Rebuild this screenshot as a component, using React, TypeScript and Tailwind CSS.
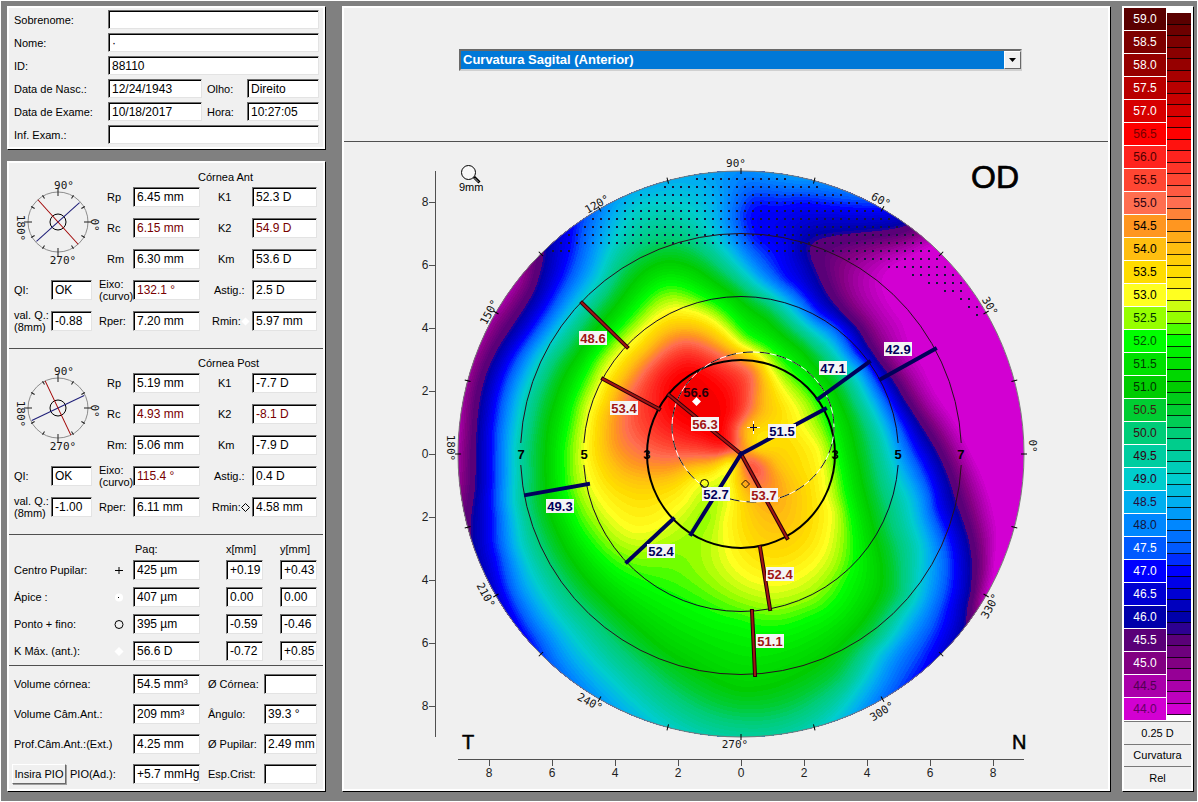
import React from 'react';
import clsx from 'clsx';

const FONT = '"Liberation Sans", Arial, sans-serif';
const MONO = '"DejaVu Sans Mono", monospace';

// Dioptre scale, 59.0 down to 44.0 in steps of 0.5
const SCALE: { color: string; text: string }[] = [
  { color: '#5a0000', text: 'text-white' },
  { color: '#7d0000', text: 'text-white' },
  { color: '#960000', text: 'text-white' },
  { color: '#b90000', text: 'text-white' },
  { color: '#d70000', text: 'text-white' },
  { color: '#ff0000', text: 'text-[#780000]' },
  { color: '#ff231e', text: 'text-[#500000]' },
  { color: '#ff4632', text: 'text-[#3c0000]' },
  { color: '#ff6e50', text: 'text-[#280010]' },
  { color: '#ff9620', text: 'text-black' },
  { color: '#ffbe10', text: 'text-black' },
  { color: '#ffdc00', text: 'text-black' },
  { color: '#ffff20', text: 'text-black' },
  { color: '#96ff00', text: 'text-[#003200]' },
  { color: '#00ff00', text: 'text-[#005000]' },
  { color: '#00e100', text: 'text-[#003c00]' },
  { color: '#00cc00', text: 'text-[#003200]' },
  { color: '#00cd32', text: 'text-[#3c1e14]' },
  { color: '#00cd78', text: 'text-[#3c0a14]' },
  { color: '#00cda0', text: 'text-[#320014]' },
  { color: '#00cdcd', text: 'text-[#28001e]' },
  { color: '#00aff0', text: 'text-[#280a3c]' },
  { color: '#0087ff', text: 'text-[#14143c]' },
  { color: '#005aff', text: 'text-white' },
  { color: '#0000ff', text: 'text-white' },
  { color: '#0000d2', text: 'text-white' },
  { color: '#0000aa', text: 'text-white' },
  { color: '#5a0078', text: 'text-white' },
  { color: '#820082', text: 'text-white' },
  { color: '#aa00aa', text: 'text-[#500050]' },
  { color: '#d200d2', text: 'text-[#640064]' },
];

function mix(a: string, b: string) {
  const ch = (s: string, i: number) => parseInt(s.slice(i, i + 2), 16);
  const hex = [1, 3, 5].map((i) => Math.round((ch(a, i) + ch(b, i)) / 2).toString(16).padStart(2, '0'));
  return `#${hex.join('')}`;
}

const subdivide = (colors: string[]) =>
  colors.flatMap((c, i) => (i < colors.length - 1 ? [c, mix(c, colors[i + 1])] : [c]));

// Quarter dioptre steps for the bar, eighths for the map
const FINE = subdivide(SCALE.map((s) => s.color));
const FINEST = subdivide(FINE);

const CX = 741;
const CY = 454;
const R = 283;

// Measured power (D) at points on the cornea, x/y pairs
const SAMPLES: [number, number[]][] = [
  [43, [960, 330, 1000, 450, 940, 290]],
  [43.5, [1010, 520]],
  [44.1, [925, 247, 892, 263, 882, 293, 902, 323, 922, 367, 948, 413, 968, 450, 992, 517, 993, 560, 985, 600]],
  [44.9, [860, 255, 845, 275, 872, 325, 900, 370, 925, 410, 953, 453, 977, 517, 985, 563, 525, 278, 495, 323, 465, 433]],
  [45.8, [543, 260, 538, 276, 527, 303, 510, 330, 497, 350, 485, 377, 478, 410, 475, 450, 475, 490, 470, 520]],
  [45.8, [905, 227, 868, 232, 828, 238, 808, 245, 810, 260, 822, 283, 845, 317, 878, 363, 902, 397, 922, 427, 938, 454, 962, 517, 972, 563, 972, 593, 966, 625]],
  [46.5, [556, 250, 530, 318, 485, 430, 483, 500, 484, 555, 882, 218, 810, 221, 802, 267, 860, 350, 895, 397, 928, 454, 950, 517, 962, 563, 957, 620]],
  [47.1, [575, 225, 572, 250, 563, 277, 547, 307, 527, 337, 510, 363, 500, 390, 495, 417, 493, 450, 493, 483, 494, 517, 498, 557, 508, 597, 520, 623, 532, 642]],
  [47.1, [755, 202, 802, 200, 835, 205, 882, 208, 747, 217, 755, 240, 785, 280, 818, 313, 848, 337, 872, 370, 888, 397, 905, 427, 917, 454, 935, 507, 952, 550, 953, 577, 945, 610, 922, 667]],
  [46.9, [770, 218, 785, 245]],
  [48, [587, 260, 570, 293, 543, 333, 520, 370, 507, 410, 503, 450, 502, 500, 507, 550, 518, 590, 537, 623, 560, 660]],
  [48, [741, 173, 768, 180, 800, 184, 728, 215, 737, 240, 762, 273, 795, 300, 832, 330, 862, 367, 882, 403, 898, 440, 925, 500, 935, 540, 938, 577, 925, 617, 902, 650, 885, 683]],
  [47.7, [742, 193, 840, 193]],
  [48.5, [697, 183, 650, 188, 717, 203]],
  [49, [610, 250, 600, 277, 570, 317, 540, 357, 523, 397, 514, 450, 513, 500, 520, 543, 537, 583, 563, 623, 590, 657, 617, 685, 640, 205, 705, 225]],
  [49, [735, 262, 755, 283, 785, 305, 818, 336, 845, 365, 868, 402, 885, 438, 908, 500, 920, 543, 918, 577, 905, 613, 878, 650, 855, 690]],
  [50, [650, 243, 617, 273, 590, 313, 557, 357, 537, 400, 528, 450, 528, 493, 538, 537, 560, 580, 597, 623, 643, 670, 697, 710, 741, 722]],
  [50, [700, 250, 735, 280, 768, 303, 802, 335, 832, 367, 855, 403, 870, 438, 882, 490, 892, 527, 902, 567, 902, 597, 875, 640, 845, 680, 800, 712]],
  [51, [663, 262, 633, 283, 610, 313, 577, 357, 555, 403, 547, 450, 547, 483, 560, 537, 587, 580, 617, 610, 660, 647, 697, 670, 740, 690]],
  [51, [700, 271, 735, 295, 768, 320, 802, 350, 832, 385, 848, 420, 855, 450, 862, 483, 872, 523, 882, 570, 878, 597, 852, 633, 812, 667, 768, 687]],
  [52, [663, 285, 637, 307, 617, 330, 590, 363, 570, 410, 562, 450, 563, 483, 580, 530, 613, 567, 657, 590, 697, 608, 740, 622]],
  [52, [700, 295, 745, 332, 785, 360, 815, 397, 830, 430, 837, 450, 842, 470, 850, 510, 855, 550, 845, 583, 808, 618, 775, 628]],
  [52.5, [670, 297, 643, 317, 617, 343, 593, 380, 580, 417, 575, 450, 577, 483, 597, 523, 630, 553, 667, 547, 708, 518, 700, 570, 740, 600]],
  [52.5, [755, 347, 785, 377, 808, 403, 822, 433, 830, 467, 837, 500, 842, 537, 835, 570, 812, 597, 775, 608]],
  [53, [677, 308, 637, 335, 610, 365, 590, 407, 585, 450, 590, 480, 610, 513, 635, 531, 660, 525, 685, 502, 712, 480, 730, 463]],
  [53, [740, 346, 768, 370, 792, 403, 802, 427, 818, 450, 825, 470, 832, 510, 825, 547, 802, 573, 768, 583, 735, 565, 725, 520, 730, 490]],
  [53.5, [683, 321, 643, 345, 620, 371, 605, 403, 597, 433, 603, 470, 627, 492, 663, 490, 697, 472, 780, 412, 785, 440, 800, 470, 808, 510, 790, 550, 750, 540]],
  [54.4, [683, 333, 643, 361, 623, 390, 613, 417, 613, 443, 627, 463, 670, 469, 705, 462, 758, 400, 758, 370, 738, 356]],
  [55, [683, 342, 650, 365, 630, 393, 626, 420, 638, 446, 690, 456, 720, 455, 750, 373, 751, 405, 737, 447]],
  [56, [687, 358, 660, 375, 655, 403, 668, 430, 705, 443, 728, 446, 735, 415, 731, 381]],
  [56.6, [696, 400, 697, 378, 677, 408, 715, 408, 715, 430]],
  [55.3, [749, 463, 755, 472]],
  [54.7, [768, 473, 765, 487]],
  [54.3, [743, 430]],
  [54, [752, 500, 778, 467, 789, 490, 782, 518, 748, 440, 762, 415]],
  [53.4, [734, 480, 757, 446, 768, 440]],
];

const STEP = 4;
const COLS = Math.ceil((2 * R) / STEP) + 2;
const SMOOTH = 0.005;

const kernel = (dx: number, dy: number) => {
  const d = dx * dx + dy * dy;
  return d === 0 ? 0 : d * Math.log(d);
};

// Thin plate spline through the samples, evaluated on a square grid
function buildGrid() {
  const pts: [number, number, number][] = [];
  SAMPLES.forEach(([v, xy]) => {
    for (let i = 0; i < xy.length; i += 2) pts.push([(xy[i] - CX) / R, (xy[i + 1] - CY) / R, v]);
  });
  const n = pts.length;
  const size = n + 3;
  const m = Array.from({ length: size }, () => new Float64Array(size + 1));
  for (let i = 0; i < n; i++) {
    for (let j = 0; j < n; j++) m[i][j] = kernel(pts[i][0] - pts[j][0], pts[i][1] - pts[j][1]);
    // the centre keeps its sharp bow tie, the periphery is smoothed
    const dist = Math.hypot(pts[i][0], pts[i][1]);
    m[i][i] = dist < 0.3 ? SMOOTH / 5 : SMOOTH;
    [1, pts[i][0], pts[i][1]].forEach((p, k) => {
      m[i][n + k] = p;
      m[n + k][i] = p;
    });
    m[i][size] = pts[i][2];
  }
  for (let c = 0; c < size; c++) {
    let p = c;
    for (let r = c + 1; r < size; r++) if (Math.abs(m[r][c]) > Math.abs(m[p][c])) p = r;
    [m[c], m[p]] = [m[p], m[c]];
    for (let r = c + 1; r < size; r++) {
      const f = m[r][c] / m[c][c];
      if (f) for (let k = c; k <= size; k++) m[r][k] -= f * m[c][k];
    }
  }
  const w = new Float64Array(size);
  for (let r = size - 1; r >= 0; r--) {
    let s = m[r][size];
    for (let k = r + 1; k < size; k++) s -= m[r][k] * w[k];
    w[r] = s / m[r][r];
  }
  const grid: number[][] = [];
  for (let j = 0; j < COLS; j++) {
    grid.push([]);
    for (let i = 0; i < COLS; i++) {
      const x = (i * STEP - R) / R;
      const y = (j * STEP - R) / R;
      let v = w[n] + w[n + 1] * x + w[n + 2] * y;
      for (let k = 0; k < n; k++) v += w[k] * kernel(x - pts[k][0], y - pts[k][1]);
      grid[j].push(v);
    }
  }
  return grid;
}

// Path of everything at or above the level
function bandPath(grid: number[][], level: number) {
  const x0 = CX - R;
  const y0 = CY - R;
  let d = '';
  for (let j = 0; j < COLS - 1; j++) {
    let run = -1;
    for (let i = 0; i < COLS; i++) {
      const corners =
        i < COLS - 1
          ? [
              [i, j, grid[j][i]],
              [i + 1, j, grid[j][i + 1]],
              [i + 1, j + 1, grid[j + 1][i + 1]],
              [i, j + 1, grid[j + 1][i]],
            ]
          : [];
      const above = corners.filter((c) => c[2] >= level).length;
      if (above === 4) {
        if (run < 0) run = i;
        continue;
      }
      if (run >= 0) {
        d += `M${x0 + run * STEP} ${y0 + j * STEP}h${(i - run) * STEP}v${STEP}h${(run - i) * STEP}z`;
        run = -1;
      }
      if (above > 0) {
        const poly: string[] = [];
        corners.forEach((a, k) => {
          const b = corners[(k + 1) % 4];
          if (a[2] >= level) poly.push(`${x0 + a[0] * STEP} ${y0 + a[1] * STEP}`);
          if (a[2] >= level !== b[2] >= level) {
            const t = (level - a[2]) / (b[2] - a[2]);
            const px = x0 + (a[0] + t * (b[0] - a[0])) * STEP;
            const py = y0 + (a[1] + t * (b[1] - a[1])) * STEP;
            poly.push(`${px.toFixed(1)} ${py.toFixed(1)}`);
          }
        });
        d += `M${poly.join('L')}z`;
      }
    }
  }
  return d;
}

const GRID = buildGrid();
const BANDS = FINEST.map((color, i) => ({ color, level: 59 - i * 0.125 }))
  // blue meets purple on a hard edge
  .filter((b) => b.level > 44 && b.level <= 57 && !(b.level > 45.5 && b.level < 45.8))
  .reverse()
  .map((b) => ({ level: b.level, color: b.color, d: bandPath(GRID, b.level - 0.063) }));

// Extrapolated area is marked with dots
const DOT_ROWS: [number, number][] = [
  [251, 765], [259, 845], [267, 888], [275, 913], [283, 928], [291, 945], [299, 961], [307, 968], [315, 977],
];

function dotsPath() {
  let d = '';
  const put = (x: number, y: number) => {
    if (Math.hypot(x - CX, y - CY) < R - 4) d += `M${x - 1} ${y - 1}h2v2h-2z`;
  };
  for (let x = 457; x < 1024; x += 8) {
    for (let y = 179; y < 250; y += 8) put(x, y);
    DOT_ROWS.forEach(([y, from]) => x >= from && put(x, y));
    if (x < 572) put(x, 251);
  }
  return d;
}

const RED = '#a01414';
const NAVY = '#00005a';

const MERIDIANS: [number, number, number, number, string][] = [
  [582, 303, 627, 347, RED],
  [603, 379, 659, 409, RED],
  [669, 395, 741, 454, RED],
  [741, 454, 787, 538, RED],
  [760, 547, 770, 609, RED],
  [752, 611, 755, 675, RED],
  [741, 454, 825, 409, NAVY],
  [818, 399, 869, 362, NAVY],
  [881, 379, 935, 349, NAVY],
  [741, 454, 691, 534, NAVY],
  [673, 519, 627, 562, NAVY],
  [588, 484, 526, 495, NAVY],
];

const TAGS: [string, number, number, string][] = [
  ['48.6', 593, 338, RED],
  ['53.4', 624, 408, RED],
  ['56.3', 705, 424, RED],
  ['53.7', 764, 495, RED],
  ['52.4', 780, 574, RED],
  ['51.1', 770, 641, RED],
  ['51.5', 782, 431, NAVY],
  ['47.1', 833, 368, NAVY],
  ['42.9', 898, 349, NAVY],
  ['52.7', 716, 494, NAVY],
  ['52.4', 661, 551, NAVY],
  ['49.3', 560, 506, NAVY],
];

const DEGREES: [string, number, number, number][] = [
  ['90°', 736, 163, 0],
  ['60°', 881, 200, 28],
  ['30°', 990, 306, 60],
  ['0°', 1033, 446, 90],
  ['330°', 990, 606, -62],
  ['300°', 882, 711, -32],
  ['270°', 735, 744, 0],
  ['240°', 590, 702, 28],
  ['210°', 486, 595, 62],
  ['180°', 451, 448, 90],
  ['150°', 489, 312, -62],
  ['120°', 597, 204, -30],
];

function ring(r: number) {
  const g = 11;
  const dx = Math.sqrt(r * r - g * g);
  return (
    `M${CX - dx} ${CY - g}A${r} ${r} 0 0 1 ${CX + dx} ${CY - g}` +
    `M${CX - dx} ${CY + g}A${r} ${r} 0 0 0 ${CX + dx} ${CY + g}`
  );
}

function CurvatureMap() {
  const axis = [-8, -6, -4, -2, 0, 2, 4, 6, 8];
  return (
    <svg viewBox="344 142 764 646" className="block w-full" role="img" aria-label="Curvatura Sagital">
      <defs>
        <clipPath id="cornea">
          <circle cx={CX} cy={CY} r={R} />
        </clipPath>
      </defs>
      <g clipPath="url(#cornea)">
        <circle cx={CX} cy={CY} r={R} fill="#d200d2" />
        {BANDS.map((b) => (
          <path key={b.level} d={b.d} fill={b.color} shapeRendering="crispEdges" />
        ))}
      </g>
      <path d={dotsPath()} fill="#14143c" shapeRendering="crispEdges" />
      <circle cx={CX} cy={CY} r={R} fill="none" stroke="#787878" strokeWidth="1" />

      {/* Axes */}
      <g stroke="#505050" strokeWidth="1" shapeRendering="crispEdges">
        <path d="M435.5 171V737M458 759.5H1024" />
        {axis.map((a) => (
          <path key={a} d={`M429 ${CY + a * 31.5 + 0.5}h6M${CX + a * 31.5 + 0.5} 760v6`} />
        ))}
      </g>
      <g fontFamily={FONT} fontSize="12" fill="#1e1e1e" textAnchor="middle">
        {axis.map((a) => (
          <React.Fragment key={a}>
            <text x="425" y={CY + a * 31.5 + 4}>{Math.abs(a)}</text>
            <text x={CX + a * 31.5} y="777">{Math.abs(a)}</text>
          </React.Fragment>
        ))}
      </g>

      {/* Degree marks */}
      {Array.from({ length: 24 }, (_, i) => (
        <path key={i} d={`M${R - 3} 0h6`} stroke="#000" transform={`translate(${CX} ${CY}) rotate(${i * 15})`} />
      ))}
      <g fontFamily={MONO} fontSize="11" fill="#141414" textAnchor="middle">
        {DEGREES.map(([t, x, y, a]) => (
          <text key={t} y="4" transform={`translate(${x} ${y}) rotate(${a})`}>{t}</text>
        ))}
      </g>

      {/* Zones */}
      <path d={ring(157.5)} fill="none" stroke="#140a28" strokeWidth="1" />
      <path d={ring(220.5)} fill="none" stroke="#28101e" strokeWidth="1" />
      <circle cx={CX} cy={CY} r="94" fill="none" stroke="#000" strokeWidth="2" />
      <ellipse cx="753" cy="427" rx="81" ry="75" fill="none" stroke="#fff" strokeWidth="1" />
      <ellipse cx="753" cy="427" rx="81" ry="75" fill="none" stroke="#141414" strokeWidth="1" strokeDasharray="10 7" />
      <g fontFamily={FONT} fontSize="13" fontWeight="700" textAnchor="middle">
        {[3, 5, 7].map((z) => (
          <React.Fragment key={z}>
            <text x={CX - z * 31.4} y="459">{z}</text>
            <text x={CX + z * 31.4} y="459">{z}</text>
          </React.Fragment>
        ))}
      </g>

      {MERIDIANS.map(([x1, y1, x2, y2, c], i) => (
        <g key={i} strokeLinecap="square">
          <path d={`M${x1} ${y1}L${x2} ${y2}`} stroke={c === RED ? '#28000a' : c} strokeWidth="4" />
          {c === RED && <path d={`M${x1} ${y1}L${x2} ${y2}`} stroke={c} strokeWidth="2" />}
        </g>
      ))}
      <g fontFamily={FONT} fontSize="13" fontWeight="700" textAnchor="middle">
        {TAGS.map(([t, x, y, c], i) => (
          <g key={i}>
            <rect x={x - 14} y={y - 7} width="28" height="14" fill="#f5f5f5" />
            <text x={x} y={y + 5} fill={c}>{t}</text>
          </g>
        ))}
        <text x="696" y="397" fill="#28000a">56.6</text>
      </g>

      {/* Pupil centre, K max, thinnest point, posterior Rmin */}
      <path d="M747 427.5h13M753.5 421v13" stroke="#fff" />
      <path d="M750 427.5h7M753.5 424v7" stroke="#00003c" />
      <path d="M696.5 397l4.5 4.5-4.5 4.5-4.5-4.5z" fill="#fff" />
      <circle cx="704.5" cy="483.5" r="4" fill="none" stroke="#000" />
      <path d="M745.5 480l4 4-4 4-4-4z" fill="none" stroke="#28140a" />

      {/* Magnifier */}
      <circle cx="468.5" cy="172.5" r="7" fill="#f8f8f8" stroke="#000" />
      <path d="M474 177l5.5 5.5" stroke="#000" strokeWidth="3" />
      <path d="M474.5 178l4 4" stroke="#aaa" strokeWidth="1" />
      <g fontFamily={FONT}>
        <text x="459" y="191" fontSize="11">9mm</text>
        <text x="971" y="188" fontSize="32" stroke="#000" strokeWidth="0.7">OD</text>
        <text x="462" y="749" fontSize="20" stroke="#000" strokeWidth="0.5">T</text>
        <text x="1012" y="749" fontSize="20" stroke="#000" strokeWidth="0.5">N</text>
      </g>
    </svg>
  );
}

function AxisDial({ angle }: { angle: number }) {
  return (
    <svg viewBox="-44 -45 90 90" className="block w-[90px] h-[90px] max-w-none" aria-hidden="true">
      <circle r="30" fill="none" stroke="#8c8c8c" />
      {Array.from({ length: 12 }, (_, i) => (
        <path key={i} d={i % 3 ? 'M27 0h4' : 'M26 0h8'} stroke="#1e1e1e" transform={`rotate(${i * 30})`} />
      ))}
      <circle r="8" fill="none" stroke="#000" />
      <path d="M-29 0H29" stroke="#1e1e78" transform={`rotate(${90 - angle})`} />
      <path d="M-30 0H30" stroke="#a00000" transform={`rotate(${-angle})`} />
      <g fontFamily={MONO} fontSize="11" fill="#141414" textAnchor="middle">
        <text x="6" y="-33">90°</text>
        <text x="5" y="42">270°</text>
        <text transform="translate(-41 6) rotate(90)">180°</text>
        <text transform="translate(33 3) rotate(90)">0°</text>
      </g>
    </svg>
  );
}

function Panel({ className, children }: { className?: string; children: React.ReactNode }) {
  return (
    <div className={clsx('border-2 border-white bg-[#f0f0f0] shadow-[1px_1px_0_#000]', className)}>{children}</div>
  );
}

interface FieldProps {
  id: string;
  value?: string;
  red?: boolean;
  label?: string;
  className?: string;
}

function Field({ id, value = '', red, label, className }: FieldProps) {
  return (
    <input
      id={id}
      aria-label={label}
      defaultValue={value}
      className={clsx(
        'block w-full min-w-0 h-full bg-white border border-t-[#6e6e6e] border-l-[#6e6e6e] border-r-[#e3e3e3] border-b-[#e3e3e3] shadow-[inset_1px_1px_0_#000] pl-[3px] text-xs outline-none',
        red ? 'text-[#780000]' : 'text-black',
        className
      )}
    />
  );
}

function Label({ id, className, children }: { id: string; className?: string; children: React.ReactNode }) {
  return (
    <label htmlFor={id} className={clsx('self-center whitespace-nowrap', className)}>
      {children}
    </label>
  );
}

function PatientPanel() {
  return (
    <Panel className="grid grid-cols-[94px_94px_5px_40px_1fr] auto-rows-[19px] gap-y-1 pt-[2px] pb-[3px] pl-[5px] pr-1">
      <Label id="sobrenome">Sobrenome:</Label>
      <Field id="sobrenome" className="col-span-4" />
      <Label id="nome">Nome:</Label>
      <Field id="nome" value="·" className="col-span-4" />
      <Label id="pid">ID:</Label>
      <Field id="pid" value="88110" className="col-span-4" />
      <Label id="nasc">Data de Nasc.:</Label>
      <Field id="nasc" value="12/24/1943" />
      <Label id="olho" className="col-start-4">Olho:</Label>
      <Field id="olho" value="Direito" />
      <Label id="exame">Data de Exame:</Label>
      <Field id="exame" value="10/18/2017" />
      <Label id="hora" className="col-start-4">Hora:</Label>
      <Field id="hora" value="10:27:05" />
      <Label id="inf">Inf. Exam.:</Label>
      <Field id="inf" className="col-span-4" />
    </Panel>
  );
}

interface Cornea {
  id: string;
  title: string;
  angle: number;
  r: [string, string, string];
  k: [string, string, string];
  rmLabel: string;
  axis: string;
  astig: string;
  q: string;
  rper: string;
  rmin: string;
  mark: React.ReactNode;
}

function CorneaSection({ c }: { c: Cornea }) {
  const rLabels = ['Rp', 'Rc', c.rmLabel];
  const kLabels = ['K1', 'K2', 'Km'];
  return (
    <section className="border-b border-[#505050] pt-2 pb-[17px] pl-[5px]">
      <h2 className="h-4 leading-3 pl-[184px]">{c.title}</h2>
      <div className="grid grid-cols-[37px_41px_7px_34px_67px_12px_40px_65px] auto-rows-[20px] gap-y-[11px]">
        <div className="col-start-1 col-span-3 row-start-1 row-span-3 -mt-[10px]">
          <AxisDial angle={c.angle} />
        </div>
        {rLabels.map((l, i) => (
          <React.Fragment key={l}>
            <Label id={`${c.id}-r${i}`} className="col-start-4 pl-2">{l}</Label>
            <Field id={`${c.id}-r${i}`} value={c.r[i]} red={i === 1} />
            <Label id={`${c.id}-k${i}`} className="col-start-7 pl-[6px]">{kLabels[i]}</Label>
            <Field id={`${c.id}-k${i}`} value={c.k[i]} red={i === 1} />
          </React.Fragment>
        ))}
        <Label id={`${c.id}-qi`} className="col-start-1">QI:</Label>
        <Field id={`${c.id}-qi`} value="OK" />
        <Label id={`${c.id}-axis`} className="col-start-4 leading-3">
          Eixo:
          <br />
          (curvo)
        </Label>
        <Field id={`${c.id}-axis`} value={c.axis} red />
        <Label id={`${c.id}-astig`} className="col-start-7 pl-[2px]">Astig.:</Label>
        <Field id={`${c.id}-astig`} value={c.astig} />
        <Label id={`${c.id}-q`} className="col-start-1 leading-3">
          val. Q.:
          <br />
          (8mm)
        </Label>
        <Field id={`${c.id}-q`} value={c.q} />
        <Label id={`${c.id}-rper`} className="col-start-4">Rper:</Label>
        <Field id={`${c.id}-rper`} value={c.rper} />
        <Label id={`${c.id}-rmin`} className="col-start-7 flex items-center justify-between pr-[2px]">
          Rmin:
          {c.mark}
        </Label>
        <Field id={`${c.id}-rmin`} value={c.rmin} />
      </div>
    </section>
  );
}

const CORNEAS: Cornea[] = [
  {
    id: 'ant',
    title: 'Córnea Ant',
    angle: 132.1,
    r: ['6.45 mm', '6.15 mm', '6.30 mm'],
    k: ['52.3 D', '54.9 D', '53.6 D'],
    rmLabel: 'Rm',
    axis: '132.1 °',
    astig: '2.5 D',
    q: '-0.88',
    rper: '7.20 mm',
    rmin: '5.97 mm',
    mark: (
      <svg viewBox="0 0 9 9" className="w-[9px] h-[9px]"><path d="M4.5 0.5l4 4-4 4-4-4z" fill="#fff" /></svg>
    ),
  },
  {
    id: 'post',
    title: 'Córnea Post',
    angle: 115.4,
    r: ['5.19 mm', '4.93 mm', '5.06 mm'],
    k: ['-7.7 D', '-8.1 D', '-7.9 D'],
    rmLabel: 'Rm:',
    axis: '115.4 °',
    astig: '0.4 D',
    q: '-1.00',
    rper: '6.11 mm',
    rmin: '4.58 mm',
    mark: (
      <svg viewBox="0 0 9 9" className="w-[9px] h-[9px]"><path d="M4.5 0.5l4 4-4 4-4-4z" fill="none" stroke="#000" /></svg>
    ),
  },
];

const POINTS = [
  { id: 'pupil', label: 'Centro Pupilar:', v: '425 µm', x: '+0.19', y: '+0.43', mark: <path d="M2 5.5h8M6 2v7" stroke="#000" /> },
  {
    id: 'apex',
    label: 'Ápice :',
    v: '407 µm',
    x: '0.00',
    y: '0.00',
    mark: (
      <>
        <circle cx="6" cy="5.5" r="4" fill="#fff" />
        <path d="M5 5h1v1h-1z" />
      </>
    ),
  },
  { id: 'thin', label: 'Ponto + fino:', v: '395 µm', x: '-0.59', y: '-0.46', mark: <circle cx="6" cy="5.5" r="4" fill="none" stroke="#000" /> },
  { id: 'kmax', label: 'K Máx. (ant.):', v: '56.6 D', x: '-0.72', y: '+0.85', mark: <path d="M6 1l4.5 4.5-4.5 4.5-4.5-4.5z" fill="#fff" /> },
];

function PointsSection() {
  return (
    <section className="border-b border-[#505050] pt-2 pb-1 pl-[5px]">
      <div className="grid grid-cols-[99px_20px_67px_26px_37px_17px_37px] h-[17px] leading-3">
        <span className="col-start-3 pl-[2px]">Paq:</span>
        <span className="col-start-5">x[mm]</span>
        <span className="col-start-7">y[mm]</span>
      </div>
      <div className="grid grid-cols-[99px_20px_67px_26px_37px_17px_37px] auto-rows-[20px] gap-y-[7px]">
        {POINTS.map((p) => (
          <React.Fragment key={p.id}>
            <Label id={p.id} className="col-start-1">{p.label}</Label>
            <svg viewBox="0 0 11 11" className="w-[11px] h-[11px] self-center">{p.mark}</svg>
            <Field id={p.id} value={p.v} />
            <Field id={`${p.id}-x`} label={`${p.label} x`} value={p.x} className="col-start-5" />
            <Field id={`${p.id}-y`} label={`${p.label} y`} value={p.y} className="col-start-7" />
          </React.Fragment>
        ))}
      </div>
    </section>
  );
}

function ChamberSection() {
  return (
    <section className="pt-2 pb-1 pl-[5px]">
      <div className="grid grid-cols-[119px_67px_8px_56px_53px] auto-rows-[20px] gap-y-[10px]">
        <Label id="vol">Volume córnea:</Label>
        <Field id="vol" value="54.5 mm³" />
        <Label id="diam" className="col-start-4">Ø Córnea:</Label>
        <Field id="diam" />
        <Label id="volca">Volume Câm.Ant.:</Label>
        <Field id="volca" value="209 mm³" />
        <Label id="ang" className="col-start-4">Ângulo:</Label>
        <Field id="ang" value="39.3 °" />
        <Label id="prof">Prof.Câm.Ant.:(Ext.)</Label>
        <Field id="prof" value="4.25 mm" />
        <Label id="pup" className="col-start-4">Ø Pupilar:</Label>
        <Field id="pup" value="2.49 mm" />
        <div className="flex items-center gap-1 -ml-[2px]">
          <button
            type="button"
            className="h-5 w-[54px] whitespace-nowrap border border-white border-r-[#696969] border-b-[#696969] shadow-[1px_1px_0_#a0a0a0] bg-[#f0f0f0]"
          >
            Insira PIO
          </button>
          <Label id="pio">PIO(Ad.):</Label>
        </div>
        <Field id="pio" value="+5.7 mmHg" />
        <Label id="esp" className="col-start-4">Esp.Crist:</Label>
        <Field id="esp" />
      </div>
    </section>
  );
}

function ColorScale() {
  return (
    <Panel className="w-[71px] shrink-0 flex flex-col text-xs">
      <div className="flex bg-white">
        <div className="w-[42px] shrink-0">
          {SCALE.map((s, i) => (
            <div
              key={s.color}
              className={clsx('h-[23px] border-b border-white leading-[22px] text-center', s.text)}
              style={{ backgroundColor: s.color }}
            >
              {(59 - i * 0.5).toFixed(1)}
            </div>
          ))}
        </div>
        <div className="flex flex-1 flex-col pt-[5px] pb-[6px] pl-px">
          {FINE.map((c) => (
            <div key={c} className="flex-1 border-b border-black/80" style={{ backgroundColor: c }} />
          ))}
        </div>
      </div>
      {['0.25 D', 'Curvatura', 'Rel'].map((t) => (
        <div key={t} className="flex flex-1 items-center justify-center border-t border-[#787878] text-[11px]">
          {t}
        </div>
      ))}
    </Panel>
  );
}

export default function App() {
  return (
    <main className="flex min-h-screen items-stretch bg-[#808080] border border-white pt-[5px] pb-[10px] pl-[6px] pr-1 font-['Liberation_Sans',Arial,sans-serif] text-[11px] leading-4 text-black">
      <div className="flex w-[318px] shrink-0 flex-col gap-3">
        <PatientPanel />
        <Panel className="flex-1">
          {CORNEAS.map((c) => (
            <CorneaSection key={c.id} c={c} />
          ))}
          <PointsSection />
          <ChamberSection />
        </Panel>
      </div>

      <Panel className="ml-[17px] mr-3 min-w-0 flex-1">
        <div className="h-[134px] border-b border-[#505050] pt-[41px] pl-[115px] pr-[86px]">
          <div className="relative">
            <select
              aria-label="Mapa"
              className="block h-[22px] w-full appearance-none border-2 border-[#696969] border-r-[#d0d0d0] border-b-[#d0d0d0] bg-[#0078d7] pl-[2px] text-[13px] font-bold text-white outline-none"
            >
              <option>Curvatura Sagital (Anterior)</option>
            </select>
            <span className="pointer-events-none absolute inset-y-[2px] right-px flex w-[17px] items-center justify-center border border-white border-r-[#696969] border-b-[#696969] bg-[#f0f0f0]">
              <svg viewBox="0 0 7 4" className="w-[7px] h-1"><path d="M0 0h7l-3.5 4z" /></svg>
            </span>
          </div>
        </div>
        <CurvatureMap />
      </Panel>

      <ColorScale />
    </main>
  );
}
